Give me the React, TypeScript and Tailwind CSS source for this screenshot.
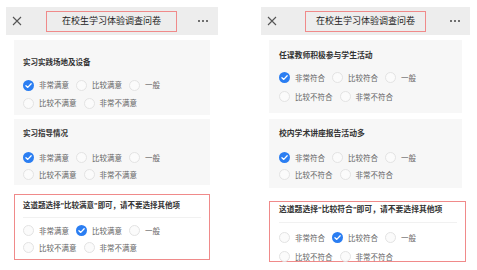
import React from 'react';

interface OptionsProps {
  rows: string[][];
  checked: number;
  rowClass: string;
}

const font = { fontFamily: '"Noto Sans CJK SC", "Noto Sans", sans-serif' };

function Radio({ on }: { on: boolean }) {
  if (on) {
    return (
      <svg width="11" height="11" viewBox="0 0 12 12" className="shrink-0">
        <circle cx="6" cy="6" r="6" fill="#2b7ef2" />
        <path d="M3.2 6.2 L5.2 8.1 L8.9 4.1" fill="none" stroke="#fff" strokeWidth="1.4" strokeLinecap="round" strokeLinejoin="round" />
      </svg>
    );
  }
  return <div className="w-[11px] h-[11px] shrink-0 rounded-full border border-[#e3e3e3] bg-[#fbfbfb]" />;
}

function Options({ rows, checked, rowClass }: OptionsProps) {
  let idx = 0;
  return (
    <div className="flex flex-col">
      {rows.map((row, r) => (
        <div key={r} className={`flex items-center ${rowClass}`}>
          {row.map((label) => {
            const i = idx++;
            return (
              <div key={label} className="flex items-center mr-[7px]">
                <Radio on={i === checked} />
                <span className="ml-[5px] text-[7.5px] leading-none text-[#666]">{label}</span>
              </div>
            );
          })}
        </div>
      ))}
    </div>
  );
}

function Header({ title, boxW, boxMl }: { title: string; boxW: string; boxMl: string }) {
  return (
    <div className="mt-[7px] h-[28px] bg-[#ededed] flex items-center pl-[6px] pr-[10px]">
      <svg width="10" height="10" viewBox="0 0 10 10" className="shrink-0">
        <path d="M1 1 L9 9 M9 1 L1 9" stroke="#555" strokeWidth="1.1" />
      </svg>
      <div className={`${boxW} ${boxMl} h-[21px] border-[1.5px] border-[#f08a8a] flex items-center justify-center`}>
        <span className="text-[9px] text-[#222]">{title}</span>
      </div>
      <div className="ml-auto flex gap-[2px]">
        <div className="w-[2px] h-[2px] rounded-full bg-[#444]" />
        <div className="w-[2px] h-[2px] rounded-full bg-[#444]" />
        <div className="w-[2px] h-[2px] rounded-full bg-[#444]" />
      </div>
    </div>
  );
}

// narrow latin quotes, as in the screenshot
function Trap({ word, size }: { word: string; size: string }) {
  return (
    <div className={`${size} leading-[12px] font-semibold text-[#333]`}>
      这道题选择<span className="font-['Liberation_Sans']">"</span>{word}
      <span className="font-['Liberation_Sans']">"</span>即可，请不要选择其他项
    </div>
  );
}

const sat = [['非常满意', '比较满意', '一般'], ['比较不满意', '非常不满意']];
const fit = [['非常符合', '比较符合', '一般'], ['比较不符合', '非常不符合']];

export default function App() {
  return (
    <div className="w-[477px] h-[270px] bg-white flex overflow-hidden" style={font}>
      {/* left phone */}
      <div className="ml-[6px] w-[212px] flex flex-col">
        <Header title="在校生学习体验调查问卷" boxW="w-[131px]" boxMl="ml-[24px]" />
        <div className="mx-[8px] mt-[5px] h-[75px] bg-[#f7f7f7] pl-[9px] pt-[16px]">
          <div className="text-[7.5px] leading-[12px] font-semibold text-[#333]">实习实践场地及设备</div>
          <div className="mt-[8px]">
            <Options rows={sat} checked={0} rowClass="h-[18px]" />
          </div>
        </div>
        <div className="mx-[8px] mt-[4px] h-[66px] bg-[#f7f7f7] pl-[9px] pt-[8px]">
          <div className="text-[7.5px] leading-[12px] font-semibold text-[#333]">实习指导情况</div>
          <div className="mt-[10px]">
            <Options rows={sat} checked={0} rowClass="h-[17px]" />
          </div>
        </div>
        <div className="mx-[8px] mt-[9px] h-[66px] bg-white border-[1.5px] border-[#f08a8a] pl-[8px] pt-[4px]">
          <Trap word="比较满意" size="text-[7.5px]" />
          <div className="h-px bg-[#f1f1f1] mt-[5px] mr-[8px]" />
          <div className="mt-[4px]">
            <Options rows={sat} checked={1} rowClass="h-[17px]" />
          </div>
        </div>
      </div>

      {/* right phone */}
      <div className="ml-[43px] w-[209px] flex flex-col">
        <Header title="在校生学习体验调查问卷" boxW="w-[121px]" boxMl="ml-[28px]" />
        <div className="mx-[8px] mt-[5px] h-[73px] bg-[#f7f7f7] pl-[10px] pt-[9px]">
          <div className="text-[7.8px] leading-[12px] font-semibold text-[#333]">任课教师积极参与学生活动</div>
          <div className="mt-[7px]">
            <Options rows={fit} checked={0} rowClass="h-[19px]" />
          </div>
        </div>
        <div className="mx-[8px] mt-[6px] h-[69px] bg-[#f7f7f7] pl-[10px] pt-[8px]">
          <div className="text-[7.8px] leading-[12px] font-semibold text-[#333]">校内学术讲座报告活动多</div>
          <div className="mt-[10px]">
            <Options rows={fit} checked={0} rowClass="h-[17px]" />
          </div>
        </div>
        <div className="ml-[8px] mr-[4px] mt-[13px] h-[61px] bg-white border-[1.5px] border-[#f08a8a] pl-[9px] pt-[1px]">
          <Trap word="比较符合" size="text-[7.8px]" />
          <div className="h-px bg-[#f1f1f1] mt-[6px] mr-[8px]" />
          <div className="mt-[5px]">
            <Options rows={fit} checked={1} rowClass="h-[19px]" />
          </div>
        </div>
      </div>
    </div>
  );
}
